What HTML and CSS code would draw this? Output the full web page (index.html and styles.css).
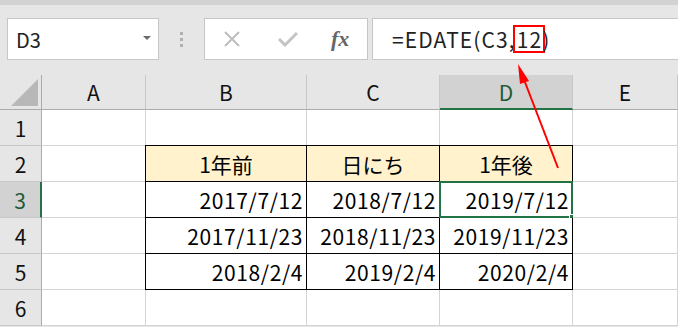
FILE: index.html
```
<!DOCTYPE html>
<html lang="ja">
  <head>
    <meta charset="UTF-8" />
    <title>EDATE</title>
    <link rel="stylesheet" href="styles.css">
  </head>
  <body>
    <div class="top-strip"></div>
    <div class="toolbar">
      <div class="name-box">
        <span>D3</span>
        <span class="caret"></span>
      </div>
      <div class="grip"><i></i><i></i><i></i></div>
      <div class="buttons">
        <svg width="18" height="16" viewBox="0 0 18 16"><path d="M2 1 L16 15 M16 1 L2 15" stroke="#bdbdbd" stroke-width="2" fill="none"/></svg>
        <svg width="20" height="16" viewBox="0 0 20 16"><path d="M1 8 L7 14 L19 2" stroke="#c4c4c4" stroke-width="3" fill="none"/></svg>
        <span class="fx">fx</span>
      </div>
      <div class="formula">=EDATE(C3,<span class="mark">12</span>)</div>
    </div>
    <div class="sheet">
      <div class="corner"><span class="tri"></span></div>
      <div class="col-head">A</div>
      <div class="col-head">B</div>
      <div class="col-head">C</div>
      <div class="col-head active">D</div>
      <div class="col-head">E</div>

      <div class="row-head">1</div>
      <div class="cell"></div><div class="cell"></div><div class="cell"></div><div class="cell"></div><div class="cell"></div>

      <div class="row-head">2</div>
      <div class="cell"></div>
      <div class="cell t th tl">1年前</div>
      <div class="cell t th">日にち</div>
      <div class="cell t th">1年後</div>
      <div class="cell"></div>

      <div class="row-head active">3</div>
      <div class="cell"></div>
      <div class="cell t tl">2017/7/12</div>
      <div class="cell t">2018/7/12</div>
      <div class="cell t selected">2019/7/12<span class="handle"></span></div>
      <div class="cell"></div>

      <div class="row-head">4</div>
      <div class="cell"></div>
      <div class="cell t tl">2017/11/23</div>
      <div class="cell t">2018/11/23</div>
      <div class="cell t">2019/11/23</div>
      <div class="cell"></div>

      <div class="row-head">5</div>
      <div class="cell"></div>
      <div class="cell t tl tb">2018/2/4</div>
      <div class="cell t tb">2019/2/4</div>
      <div class="cell t tb">2020/2/4</div>
      <div class="cell"></div>

      <div class="row-head">6</div>
      <div class="cell"></div><div class="cell"></div><div class="cell"></div><div class="cell"></div><div class="cell"></div>
    </div>

    <svg class="arrow" width="678" height="327" viewBox="0 0 678 327">
      <line x1="558" y1="168" x2="523" y2="77" stroke="#ff0000" stroke-width="2"/>
      <path d="M518 64 L529 81 L520 84 Z" fill="#ff0000"/>
    </svg>
  </body>
</html>
```

FILE: styles.css
```
* {
  margin: 0;
  padding: 0;
  box-sizing: border-box;
}
body {
  width: 678px;
  height: 327px;
  overflow: hidden;
  background: #e6e6e6;
  font-family: "Noto Sans CJK JP", "Noto Sans", sans-serif;
  color: #000;
  position: relative;
}
.top-strip {
  height: 5px;
  background: #d2d2d2;
}
.toolbar {
  display: flex;
  align-items: center;
  height: 55px;
  padding: 13px 0 0 7px;
}
.name-box {
  width: 152px;
  height: 42px;
  background: #fff;
  border: 1px solid #c6c6c6;
  display: flex;
  align-items: center;
  justify-content: space-between;
  padding: 0 7px 0 8px;
  font-size: 20px;
  color: #222;
}
.caret {
  width: 0;
  height: 0;
  border-left: 4px solid transparent;
  border-right: 4px solid transparent;
  border-top: 4px solid #6a6a6a;
  margin-bottom: 3px;
}
.grip {
  width: 45px;
  display: flex;
  flex-direction: column;
  align-items: center;
  gap: 3px;
}
.grip i {
  width: 3px;
  height: 3px;
  background: #b0b0b0;
}
.buttons {
  width: 164px;
  height: 42px;
  background: #fff;
  border: 1px solid #c6c6c6;
  display: flex;
  align-items: center;
  padding: 0 0 0 18px;
  gap: 37px;
}
.fx {
  font-family: "Liberation Serif", serif;
  font-style: italic;
  font-weight: bold;
  font-size: 22px;
  color: #666;
  margin-left: -4px;
}
.formula {
  flex: 1;
  height: 42px;
  margin-left: 4px;
  background: #fff;
  border: 1px solid #c6c6c6;
  border-right: none;
  padding-left: 19px;
  font-size: 21px;
  line-height: 40px;
  letter-spacing: 1.1px;
  color: #222;
}
.mark {
  outline: 2px solid #ff0000;
  outline-offset: 1px;
  display: inline-block;
  line-height: 22px;
  padding-left: 1px;
}
.sheet {
  margin-top: 15px;
  display: grid;
  grid-template-columns: 42px 104px 161px 133px 133px 105px;
  grid-template-rows: 35px repeat(6, 36px);
  font-size: 21px;
}
.corner {
  position: relative;
  border-right: 1px solid #ababab;
  border-bottom: 1px solid #ababab;
}
.tri {
  position: absolute;
  right: 3px;
  bottom: 3px;
  width: 0;
  height: 0;
  border-left: 27px solid transparent;
  border-bottom: 27px solid #b8b8b8;
}
.col-head {
  display: flex;
  align-items: center;
  justify-content: center;
  border-right: 1px solid #c8c8c8;
  border-bottom: 1px solid #ababab;
  color: #111;
}
.col-head.active {
  background: #d2d2d2;
  border-bottom: 2px solid #217346;
  color: #1e5b38;
}
.row-head {
  display: flex;
  align-items: center;
  justify-content: center;
  border-right: 1px solid #ababab;
  border-bottom: 1px solid #c8c8c8;
  color: #111;
}
.row-head.active {
  background: #d2d2d2;
  border-right: 2px solid #217346;
  color: #1e5b38;
}
.cell {
  background: #fff;
  border-right: 1px solid #d4d4d4;
  border-bottom: 1px solid #d4d4d4;
  display: flex;
  align-items: center;
  justify-content: flex-end;
  padding-right: 3px;
  letter-spacing: 0.6px;
  position: relative;
}
.t {
  border-right: 1px solid #000;
  border-bottom: 1px solid #000;
}
.th {
  background: #fff2cc;
  border-top: 1px solid #000;
  margin-top: -1px;
  justify-content: center;
  padding-right: 0;
  letter-spacing: 0;
}
.tl {
  border-left: 1px solid #000;
  margin-left: -1px;
}
.selected {
  border: 2px solid #217346;
  margin: -1px 0 0 -1px;
  padding-right: 2px;
}
.handle {
  position: absolute;
  right: -5px;
  bottom: -5px;
  width: 7px;
  height: 7px;
  background: #217346;
  border: 1px solid #fff;
}
.arrow {
  position: absolute;
  left: 0;
  top: 0;
}
```
